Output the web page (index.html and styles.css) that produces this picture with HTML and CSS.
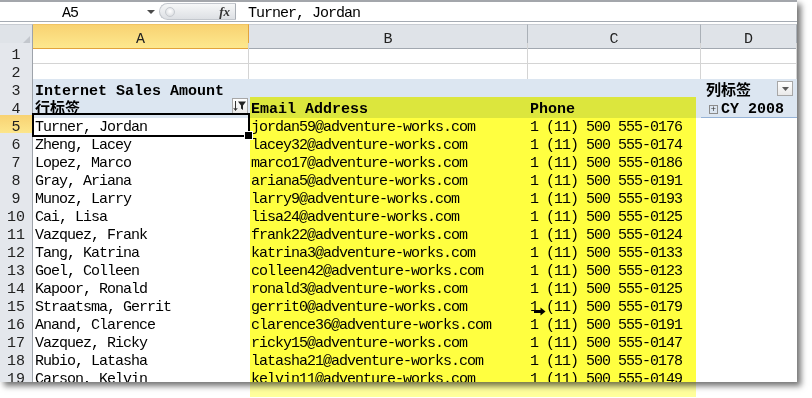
FILE: index.html
```html
<!DOCTYPE html>
<html lang="zh-CN">
<head>
    <meta charset="UTF-8">
    <meta name="viewport" content="width=device-width, initial-scale=1.0">
    <title>Internet Sales Amount</title>
    <link rel="stylesheet" href="styles.css">
</head>
<body>
<div class="page">
    <div class="window">
        <div class="formula-bar">
            <div class="name-box">
                <span class="ref">A5</span>
                <span class="drop"></span>
            </div>
            <div class="fx-zone">
                <span class="grip"></span>
                <span class="fx">fx</span>
            </div>
            <div class="formula">Turner, Jordan</div>
        </div>
        <div class="gap"></div>

        <div class="sheet">
            <div class="row col-heads">
                <div class="ch corner"><span class="tri"></span></div>
                <div class="ch sel">A</div>
                <div class="ch">B</div>
                <div class="ch">C</div>
                <div class="ch">D</div>
            </div>
            <div class="row grid-row">
                <div class="rh">1</div>
                <div class="cell"></div><div class="cell"></div><div class="cell"></div><div class="cell"></div>
            </div>
            <div class="row grid-row">
                <div class="rh">2</div>
                <div class="cell"></div><div class="cell"></div><div class="cell"></div><div class="cell"></div>
            </div>
            <div class="row pivot-row">
                <div class="rh">3</div>
                <div class="cell b">Internet Sales Amount</div>
                <div class="cell"></div>
                <div class="cell"></div>
                <div class="cell b d-label">列标签<span class="btn dd-btn"><svg width="7" height="4" viewBox="0 0 7 4"><path d="M0 0h7L3.5 4z" fill="#5a5a5a"/></svg></span></div>
            </div>
            <div class="row pivot-row">
                <div class="rh">4</div>
                <div class="cell b a-label">行标签<span class="btn filter-btn"><svg width="14" height="12" viewBox="0 0 14 12"><path d="M2.5 1v9M0.8 8l1.7 2.5L4.2 8" stroke="#333" stroke-width="1" fill="none"/><path d="M5 1.5h8L10 5.5V10L8 8.6V5.5z" fill="#222"/></svg></span></div>
                <div class="cell b">Email Address</div>
                <div class="cell b">Phone</div>
                <div class="cell b year"><span class="plus">+</span>CY 2008</div>
            </div>

            <div class="row"><div class="rh sel">5</div><div class="cell active">Turner, Jordan</div><div class="cell">jordan59@adventure-works.com</div><div class="cell">1 (11) 500 555-0176</div><div class="cell"></div></div>
            <div class="row"><div class="rh">6</div><div class="cell">Zheng, Lacey</div><div class="cell">lacey32@adventure-works.com</div><div class="cell">1 (11) 500 555-0174</div><div class="cell"></div></div>
            <div class="row"><div class="rh">7</div><div class="cell">Lopez, Marco</div><div class="cell">marco17@adventure-works.com</div><div class="cell">1 (11) 500 555-0186</div><div class="cell"></div></div>
            <div class="row"><div class="rh">8</div><div class="cell">Gray, Ariana</div><div class="cell">ariana5@adventure-works.com</div><div class="cell">1 (11) 500 555-0191</div><div class="cell"></div></div>
            <div class="row"><div class="rh">9</div><div class="cell">Munoz, Larry</div><div class="cell">larry9@adventure-works.com</div><div class="cell">1 (11) 500 555-0193</div><div class="cell"></div></div>
            <div class="row"><div class="rh">10</div><div class="cell">Cai, Lisa</div><div class="cell">lisa24@adventure-works.com</div><div class="cell">1 (11) 500 555-0125</div><div class="cell"></div></div>
            <div class="row"><div class="rh">11</div><div class="cell">Vazquez, Frank</div><div class="cell">frank22@adventure-works.com</div><div class="cell">1 (11) 500 555-0124</div><div class="cell"></div></div>
            <div class="row"><div class="rh">12</div><div class="cell">Tang, Katrina</div><div class="cell">katrina3@adventure-works.com</div><div class="cell">1 (11) 500 555-0133</div><div class="cell"></div></div>
            <div class="row"><div class="rh">13</div><div class="cell">Goel, Colleen</div><div class="cell">colleen42@adventure-works.com</div><div class="cell">1 (11) 500 555-0123</div><div class="cell"></div></div>
            <div class="row"><div class="rh">14</div><div class="cell">Kapoor, Ronald</div><div class="cell">ronald3@adventure-works.com</div><div class="cell">1 (11) 500 555-0125</div><div class="cell"></div></div>
            <div class="row"><div class="rh">15</div><div class="cell">Straatsma, Gerrit</div><div class="cell">gerrit0@adventure-works.com</div><div class="cell">1 (11) 500 555-0179</div><div class="cell"></div></div>
            <div class="row"><div class="rh">16</div><div class="cell">Anand, Clarence</div><div class="cell">clarence36@adventure-works.com</div><div class="cell">1 (11) 500 555-0191</div><div class="cell"></div></div>
            <div class="row"><div class="rh">17</div><div class="cell">Vazquez, Ricky</div><div class="cell">ricky15@adventure-works.com</div><div class="cell">1 (11) 500 555-0147</div><div class="cell"></div></div>
            <div class="row"><div class="rh">18</div><div class="cell">Rubio, Latasha</div><div class="cell">latasha21@adventure-works.com</div><div class="cell">1 (11) 500 555-0178</div><div class="cell"></div></div>
            <div class="row"><div class="rh">19</div><div class="cell">Carson, Kelvin</div><div class="cell">kelvin11@adventure-works.com</div><div class="cell">1 (11) 500 555-0149</div><div class="cell"></div></div>
        </div>
    </div>

    <!-- highlighter mark drawn over the screenshot -->
    <div class="highlight"></div>
    <svg class="pointer" width="12" height="9" viewBox="0 0 12 9"><path d="M0 3h6.5V0.5L11.5 4.5 6.5 8.5V6H0z" fill="#000"/></svg>
</div>
</body>
</html>
```

FILE: styles.css
```css
* {
    box-sizing: border-box;
}
body {
    margin: 0;
    background: #fff;
    font-family: "Liberation Mono", "Noto Sans CJK SC", monospace;
    font-size: 15px;
    letter-spacing: -1px;
    color: #000;
}
.page {
    position: relative;
    width: 812px;
    height: 398px;
    overflow: hidden;
}
.window {
    width: 797px;
    height: 382px;
    background: #fff;
    overflow: hidden;
    box-shadow: 4px 4px 6px rgba(0, 0, 0, 0.55);
}

/* formula bar */
.formula-bar {
    display: flex;
    height: 22px;
    border-top: 2px solid #a3a6ab;
    border-bottom: 1px solid #a5abb3;
}
.name-box {
    width: 159px;
    display: flex;
    align-items: center;
    padding-top: 4px;
}
.name-box .ref {
    width: 140px;
    text-align: center;
}
.drop {
    width: 0;
    height: 0;
    margin: 0 0 3px 7px;
    border-left: 4px solid transparent;
    border-right: 4px solid transparent;
    border-top: 4px solid #4a4a4a;
}
.fx-zone {
    width: 77px;
    margin: 1px 0;
    display: flex;
    align-items: center;
    border: 1px solid #c3c7cd;
    border-right-color: #a9aeb5;
    border-radius: 10px 0 0 10px;
    background: linear-gradient(#f6f7f8, #dde0e4);
}
.grip {
    width: 10px;
    height: 10px;
    margin-left: 5px;
    border-radius: 50%;
    border: 1px solid #c6cacf;
    background: radial-gradient(circle at 50% 40%, #ffffff, #d3d6db);
}
.fx {
    margin-left: auto;
    margin-right: 5px;
    font-family: "Liberation Serif", serif;
    font-style: italic;
    font-weight: bold;
    font-size: 13px;
    letter-spacing: 0;
    color: #333;
}
.formula {
    display: flex;
    align-items: center;
    padding: 4px 0 0 12px;
}
.gap {
    height: 2px;
}

/* sheet grid */
.row {
    display: grid;
    grid-template-columns: 33px 216px 279px 173px 96px;
    height: 18px;
}
.col-heads {
    height: 19px;
}
.ch {
    display: flex;
    align-items: center;
    justify-content: center;
    padding-top: 6px;
    background: #dfe3e8;
    border-top: 1px solid #c8ccd2;
    border-right: 1px solid #aab0b7;
    border-bottom: 1px solid #a2a8b0;
    letter-spacing: 0;
    color: #222;
}
.ch.sel {
    background: linear-gradient(#f8d272, #fde88e);
    border-color: #e2a33c;
    border-top-color: #f1c463;
}
.corner {
    justify-content: flex-end;
    align-items: flex-end;
    padding: 0 2px 2px 0;
    border-right-color: #9ea3aa;
}
.tri {
    width: 0;
    height: 0;
    border-left: 10px solid transparent;
    border-bottom: 10px solid #c3c7cd;
}
.rh {
    display: flex;
    align-items: flex-start;
    justify-content: center;
    padding-top: 5px;
    line-height: 15px;
    background: #e4e7ec;
    border-right: 1px solid #9ea3aa;
    border-bottom: 1px solid #c3c7cd;
    letter-spacing: 0;
    color: #222;
}
.rh.sel {
    background: linear-gradient(#f8d272, #fde88e);
    border-color: #e2a33c;
}
.cell {
    display: flex;
    align-items: flex-start;
    padding: 5px 2px 0;
    line-height: 15px;
    white-space: nowrap;
}
.grid-row .cell {
    border-right: 1px solid #d4d4d4;
    border-bottom: 1px solid #d4d4d4;
}
.pivot-row .cell {
    background: #dce6f1;
}
.b {
    font-weight: bold;
    letter-spacing: 0;
}
.a-label {
    justify-content: space-between;
    padding-right: 1px;
}
.d-label {
    justify-content: space-between;
    padding: 5px 4px 0 5px;
}
.year {
    padding-left: 8px;
    border-bottom: 1px solid #95b3d7;
}

/* pivot buttons */
.btn {
    display: flex;
    align-items: center;
    justify-content: center;
    align-self: flex-start;
    width: 16px;
    height: 16px;
    border: 1px solid #a7a7a7;
    background: linear-gradient(#ffffff, #e9e9e9);
}
.filter-btn {
    margin-top: -4px;
}
.dd-btn {
    height: 15px;
    margin-top: -3px;
}
.plus {
    display: flex;
    align-items: center;
    justify-content: center;
    width: 9px;
    height: 9px;
    margin: 3px 3px 0 0;
    border: 1px solid #8c8c8c;
    font-family: "Liberation Sans", sans-serif;
    font-size: 9px;
    font-weight: normal;
    line-height: 7px;
    color: #333;
}

/* active cell frame and fill handle */
.active {
    position: relative;
}
.active::before {
    content: "";
    position: absolute;
    left: -1px;
    top: -2px;
    right: -1px;
    bottom: -1px;
    border: 2px solid #000;
    z-index: 2;
}
.active::after {
    content: "";
    position: absolute;
    right: -4px;
    bottom: -4px;
    width: 7px;
    height: 7px;
    background: #000;
    border: 1px solid #fff;
    z-index: 3;
}

/* overlays */
.highlight {
    position: absolute;
    left: 250px;
    top: 97px;
    width: 446px;
    height: 300px;
    background: linear-gradient(#ffff40 0, #ffff40 285px, #ffff9c 285px);
    mix-blend-mode: multiply;
}
.pointer {
    position: absolute;
    left: 534px;
    top: 307px;
}
```
